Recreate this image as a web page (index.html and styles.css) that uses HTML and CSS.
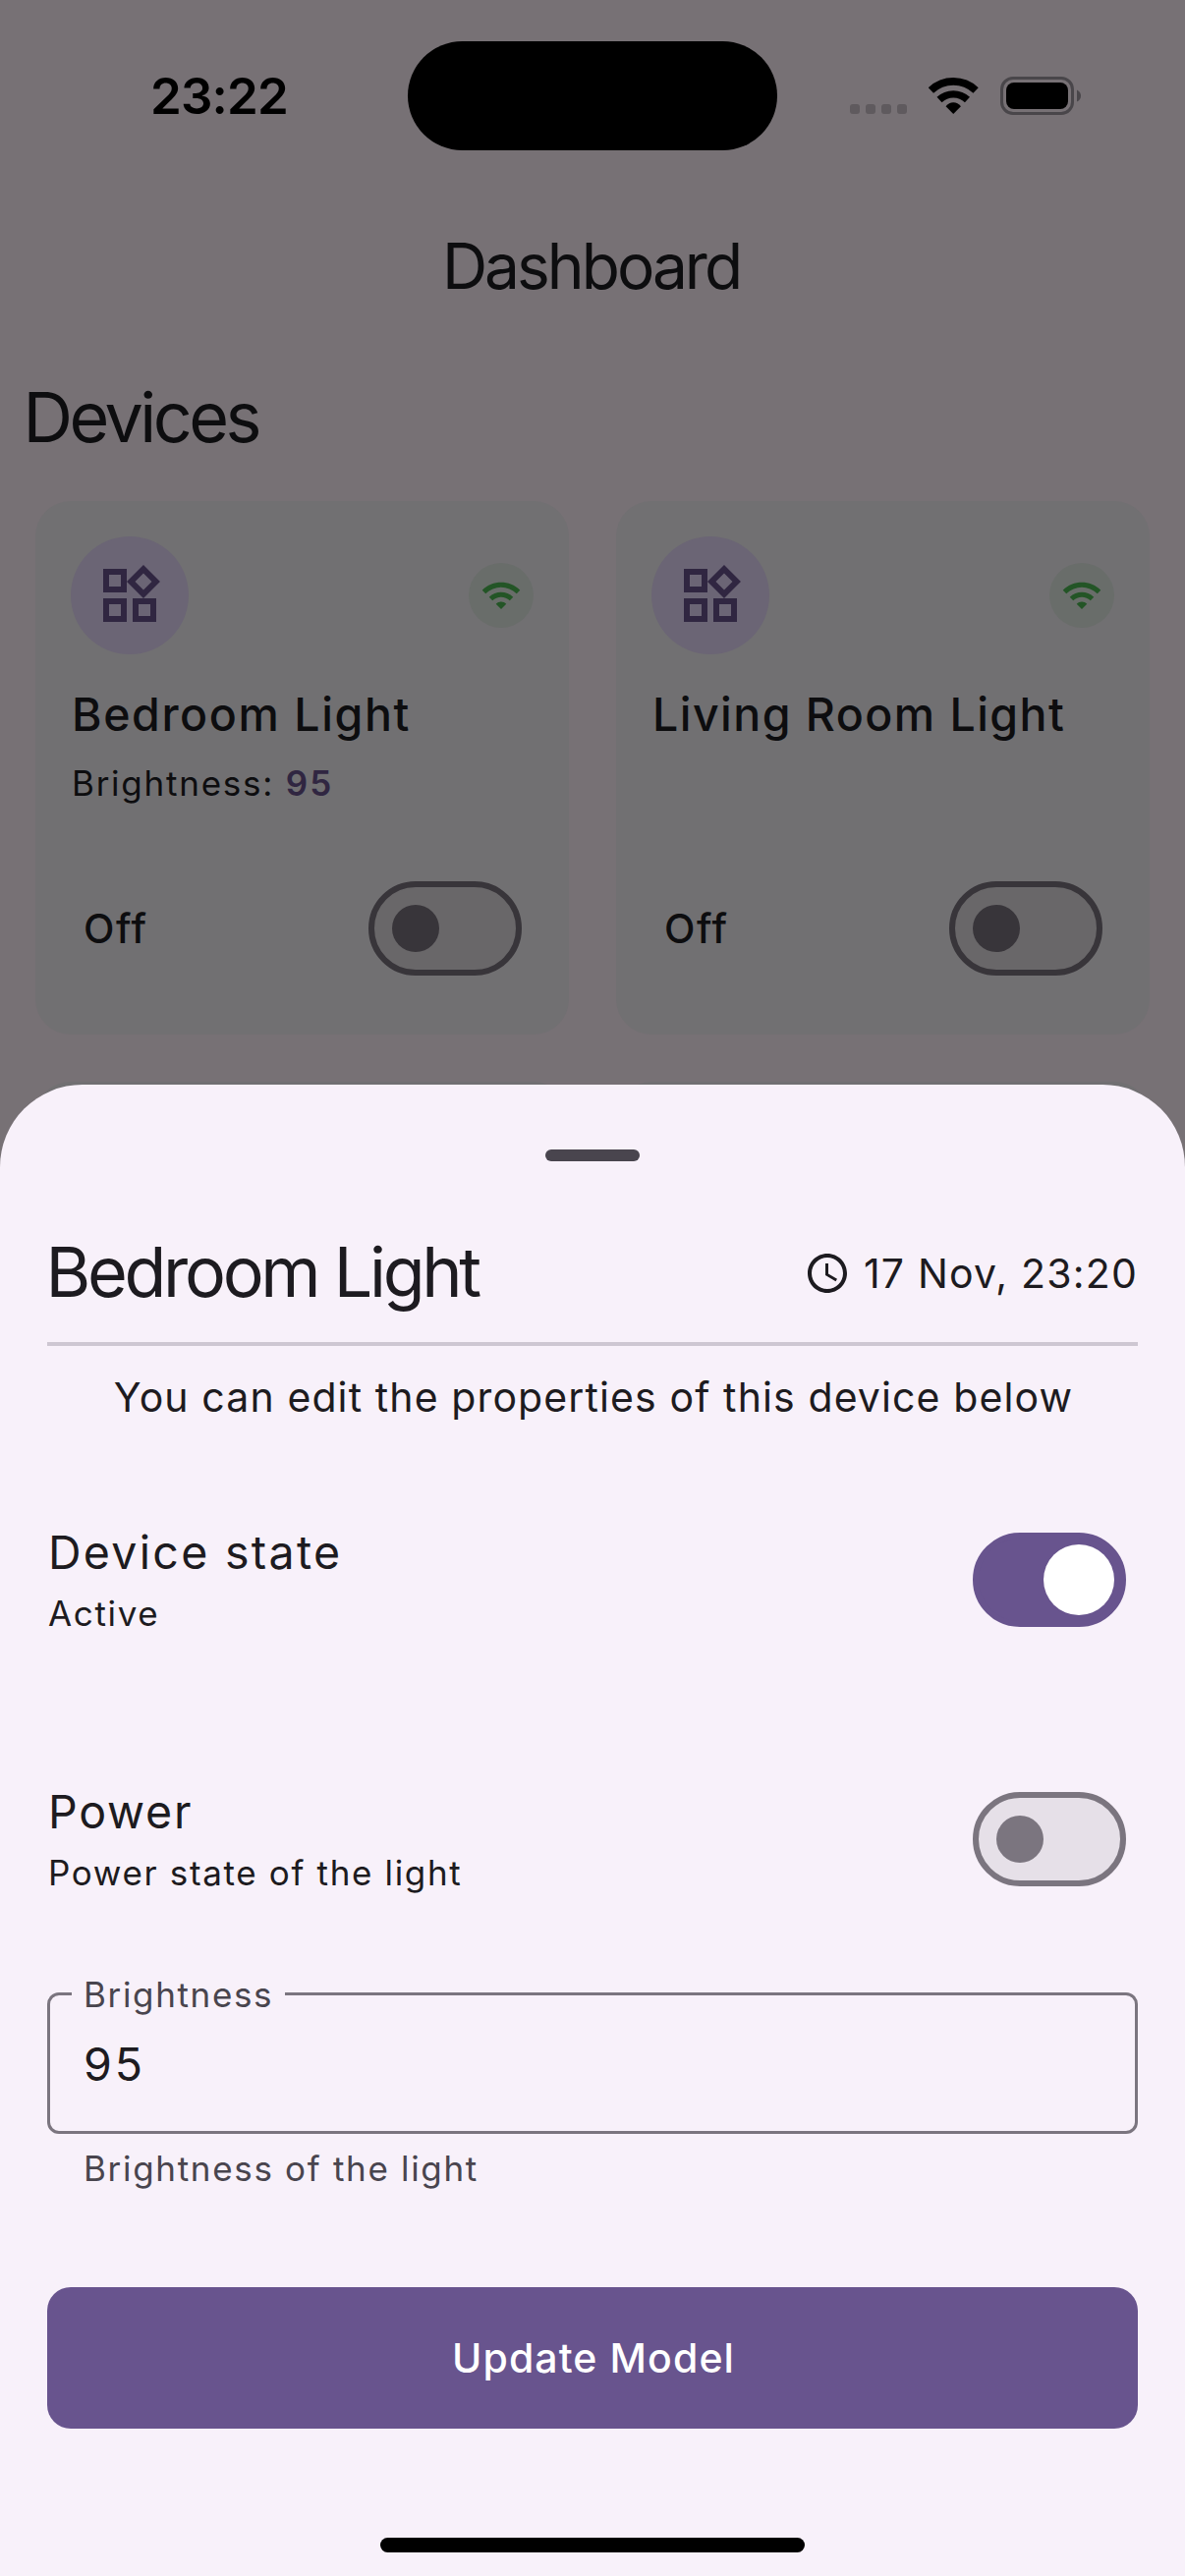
FILE: index.html
```html
<!DOCTYPE html>
<html lang="en">
<head>
<meta charset="utf-8">
<title>Dashboard</title>
<link rel="stylesheet" href="styles.css">
</head>
<body>
<svg class="sprite" aria-hidden="true">
  <symbol id="widgets" viewBox="0 0 24 24"><path d="M16.66 4.52l2.83 2.83-2.83 2.83-2.83-2.83 2.83-2.83M9 5v4H5V5h4m10 10v4h-4v-4h4M9 15v4H5v-4h4m7.66-13.31L11 7.34 16.66 13l5.66-5.66-5.66-5.65zM11 3H3v8h8V3zm10 10h-8v8h8v-8zm-10 0H3v8h8v-8z"/></symbol>
  <symbol id="wifi" viewBox="0 0 24 24"><path d="M1 9l2 2c4.97-4.97 13.03-4.97 18 0l2-2C16.93 2.93 7.08 2.93 1 9zm8 8l3 3 3-3c-1.65-1.66-4.34-1.66-6 0zm-4-4l2 2c2.76-2.76 7.24-2.76 10 0l2-2C15.14 9.14 8.87 9.14 5 13z"/></symbol>
</svg>
<div class="screen">
  <header class="status-bar">
    <span class="time">23:22</span>
    <span class="island"></span>
    <span class="status-icons">
      <span class="signal"><i></i><i></i><i></i><i></i></span>
      <svg class="status-wifi" viewBox="256 57 151 111">
        <g fill="none" stroke="#000">
          <path stroke-width="23" d="M263 96A99.5 99.5 0 0 1 400 96"/>
          <path stroke-width="22" d="M288.800 124.500A62 62 0 0 1 374.200 124.500"/>
        </g>
        <path d="M331.500 168L308.500 145Q318 133 331.500 133T354.500 145Z"/>
      </svg>
      <svg class="battery" viewBox="0 0 82 39">
        <rect x="1.500" y="1.500" width="72" height="36" rx="11.500" fill="none" stroke="#49464a" stroke-width="3"/>
        <rect x="6" y="6" width="63" height="27" rx="8"/>
        <path d="M78 13.500q4 2 4 6t-4 6z" fill="#49464a"/>
      </svg>
    </span>
  </header>

  <div class="app-bar">Dashboard</div>
  <h1 class="section-title">Devices</h1>

  <main class="device-grid">
    <article class="card">
      <div class="card-top">
        <span class="device-icon"><svg><use href="#widgets"/></svg></span>
        <span class="online-badge"><svg><use href="#wifi"/></svg></span>
      </div>
      <h2 class="card-title">Bedroom Light</h2>
      <p class="card-prop">Brightness: <b>95</b></p>
      <div class="card-action">
        <span>Off</span>
        <span class="switch dimmed"><i></i></span>
      </div>
    </article>
    <article class="card">
      <div class="card-top">
        <span class="device-icon"><svg><use href="#widgets"/></svg></span>
        <span class="online-badge"><svg><use href="#wifi"/></svg></span>
      </div>
      <h2 class="card-title card-title-long">Living Room Light</h2>
      <div class="card-action">
        <span>Off</span>
        <span class="switch dimmed"><i></i></span>
      </div>
    </article>
    <article class="card"></article>
    <article class="card"></article>
  </main>

  <section class="sheet">
    <div class="drag-handle"></div>
    <div class="sheet-header">
      <h2 class="sheet-title">Bedroom Light</h2>
      <div class="updated">
        <svg viewBox="0 0 24 24"><path d="M11.990 2C6.470 2 2 6.480 2 12s4.470 10 9.990 10C17.520 22 22 17.520 22 12S17.520 2 11.990 2zM12 20c-4.420 0-8-3.580-8-8s3.580-8 8-8 8 3.580 8 8-3.580 8-8 8zm.5-13H11v6l5.250 3.150.75-1.230-4.500-2.670z"/></svg>
        <span>17 Nov, 23:20</span>
      </div>
    </div>
    <p class="hint">You can edit the properties of this device below</p>

    <div class="setting">
      <div class="setting-text">
        <span class="setting-name">Device state</span>
        <span class="setting-desc">Active</span>
      </div>
      <span class="switch on"><i></i></span>
    </div>
    <div class="setting setting-power">
      <div class="setting-text">
        <span class="setting-name">Power</span>
        <span class="setting-desc">Power state of the light</span>
      </div>
      <span class="switch"><i></i></span>
    </div>

    <div class="field">
      <span class="field-label">Brightness</span>
      <span class="field-value">95</span>
    </div>
    <p class="helper">Brightness of the light</p>
    <button class="submit" type="button">Update Model</button>
    <div class="home-indicator"></div>
  </section>
</div>
</body>
</html>
```
FILE: styles.css
```css
* { box-sizing: border-box; margin: 0; padding: 0; }

body { font-family: Inter, sans-serif; color: #1d1b20; }

.sprite { display: none; }

.screen {
  position: relative;
  width: 1206px;
  height: 2622px;
  overflow: hidden;
  background: #777175;
}

/* Status bar */
.status-bar {
  display: grid;
  grid-template-columns: 415px 376px 1fr;
  align-items: center;
  height: 177px;
  padding-top: 17px;
  color: #000;
}
.time {
  padding-left: 153px;
  font-size: 51px;
  font-weight: 600;
  letter-spacing: -.82px;
}
.island { height: 111px; border-radius: 56px; background: #000; }
.status-icons { display: flex; align-items: center; height: 39px; padding-left: 74px; }
.signal { display: flex; align-self: flex-end; gap: 6px; margin-bottom: 1px; }
.signal i { width: 10px; height: 10px; border-radius: 3px; background: #5f5a5e; }
.status-wifi { width: 50.500px; height: 37px; margin-left: 22px; }
.battery { width: 82px; height: 39px; margin-left: 22.500px; }

/* Dashboard */
.app-bar {
  height: 187px;
  padding-right: 3px;
  line-height: 187px;
  text-align: center;
  font-size: 64px;
  letter-spacing: -2.990px;
  color: #0d0d0f;
}
.section-title {
  height: 121px;
  padding-left: 23.500px;
  line-height: 121px;
  font-size: 70px;
  font-weight: 400;
  letter-spacing: -3.500px;
  color: #0d0d0f;
}
.device-grid {
  display: grid;
  grid-template-columns: 543px 543px;
  grid-auto-rows: 543px;
  gap: 48px;
  padding: 25px 36px 0;
}
.card {
  display: flex;
  flex-direction: column;
  padding: 36px 36px 60px;
  border-radius: 36px;
  background: #717072;
  color: #0d0d0f;
}
.card-top { display: flex; align-items: center; justify-content: space-between; }
.device-icon, .online-badge { display: grid; place-items: center; border-radius: 50%; }
.device-icon { width: 120px; height: 120px; background: #6b6575; fill: #302641; }
.device-icon svg { width: 72px; height: 72px; }
.online-badge { width: 66px; height: 66px; background: #696d6a; fill: #235526; }
.online-badge svg { width: 42px; height: 42px; }
.card-title {
  margin-top: 31px;
  padding-left: 1px;
  line-height: 60px;
  font-size: 46.500px;
  font-weight: 500;
  letter-spacing: 1.600px;
  white-space: nowrap;
}
.card-title-long { letter-spacing: 1.450px; }
.card-prop {
  margin-top: 16px;
  padding-left: 1px;
  line-height: 48px;
  font-size: 35px;
  letter-spacing: 1.750px;
}
.card-prop b { font-weight: 600; letter-spacing: 2.200px; color: #302641; }
.card-action {
  display: flex;
  align-items: center;
  justify-content: space-between;
  margin-top: auto;
  padding: 0 12px 0 13px;
  font-size: 41px;
  font-weight: 500;
  letter-spacing: 1.570px;
}

/* Switch */
.switch {
  display: flex;
  align-items: center;
  width: 156px;
  height: 96px;
  padding-left: 18px;
  border: 6px solid #7b757f;
  border-radius: 48px;
  background: #e6e0e8;
}
.switch i { width: 48px; height: 48px; border-radius: 50%; background: #7b757f; }
.switch.on { padding-left: 66px; border-color: #68548e; background: #68548e; }
.switch.on i { width: 72px; height: 72px; background: #fff; }
.switch.dimmed { border-color: #38353a; background: #696769; }
.switch.dimmed i { background: #38353a; }

/* Bottom sheet */
.sheet {
  position: absolute;
  inset: 1104px 0 0;
  padding: 66px 48px 0;
  border-radius: 84px 84px 0 0;
  background: #f8f1fa;
}
.drag-handle { width: 96px; height: 12px; margin: 0 auto; border-radius: 6px; background: #49454e; }
.sheet-header {
  display: flex;
  align-items: center;
  justify-content: space-between;
  height: 125px;
  margin-top: 59px;
  padding-bottom: 15px;
}
.sheet-title {
  padding-bottom: 3px;
  margin-left: -1.500px;
  font-size: 70px;
  font-weight: 400;
  letter-spacing: -3.300px;
}
.updated { display: flex; align-items: center; gap: 13px; font-size: 41px; letter-spacing: 1.180px; }
.updated svg { width: 48px; height: 48px; fill: #1d1b20; }
.hint {
  padding-top: 22px;
  padding-left: 2px;
  border-top: 4px solid #cec7d2;
  line-height: 60px;
  text-align: center;
  font-size: 41px;
  letter-spacing: 1.110px;
}
.setting {
  display: flex;
  align-items: center;
  justify-content: space-between;
  height: 116px;
  margin-top: 98px;
  padding: 0 12px 0 1px;
}
.setting-power { margin-top: 148px; }
.setting-text { display: flex; flex-direction: column; gap: 8px; }
.setting-name { line-height: 60px; font-size: 46.500px; letter-spacing: 2.300px; }
.setting-desc { line-height: 48px; font-size: 35px; letter-spacing: 1.650px; }
.setting-power .setting-name { letter-spacing: 1.800px; }

.field {
  position: relative;
  display: flex;
  align-items: center;
  height: 144px;
  margin-top: 98px;
  padding: 2px 0 0 34px;
  border: 3px solid #7b757f;
  border-radius: 12px;
}
.field-label {
  position: absolute;
  top: -25px;
  left: 22px;
  width: 217px;
  padding-left: 12px;
  background: #f8f1fa;
  line-height: 48px;
  font-size: 35px;
  letter-spacing: 1.650px;
  color: #49454e;
}
.field-value { font-size: 46.500px; letter-spacing: 3px; }
.helper {
  margin-top: 11px;
  padding-left: 37px;
  line-height: 48px;
  font-size: 35px;
  letter-spacing: 1.680px;
  color: #49454e;
}
.submit {
  display: block;
  width: 100%;
  height: 144px;
  margin-top: 97px;
  padding-left: 2px;
  border: 0;
  border-radius: 24px;
  background: #68548e;
  color: #fff;
  font: 500 41px Inter, sans-serif;
  letter-spacing: 1.100px;
}
.home-indicator { width: 432px; height: 15px; margin: 111px auto 0; border-radius: 8px; background: #000; }
```
